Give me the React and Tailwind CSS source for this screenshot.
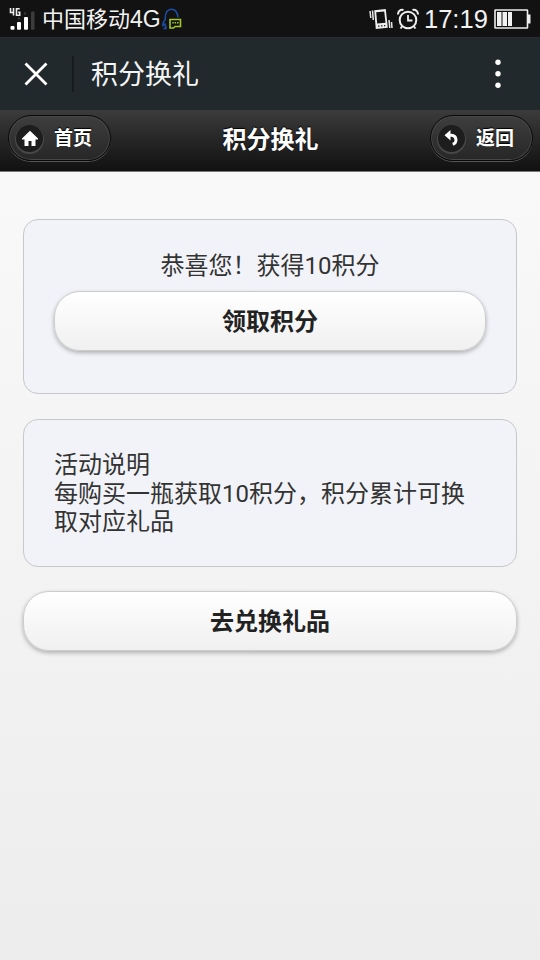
const StatusBar = () => (
  <div className="flex h-[37px] items-center bg-[#121212] text-[#f2f2f2] font-['Liberation_Sans','Noto_Sans_CJK_SC',sans-serif]">
    <svg width="28" height="24" viewBox="0 0 28 24" className="ml-2" fill="none">
      <path d="M2.500 1v4.500h3.500M5.500 1v7.500M11.700 1.800H8.500v6.400h3.200V5.200h-1.500" stroke="#eee" strokeWidth="1.600" />
      <path d="M10 11.500h2M16 6.500h2" stroke="#383838" strokeWidth="2" />
      <rect x="2.500" y="19" width="4" height="3.800" rx="1" fill="#fff" />
      <rect x="9" y="15" width="4" height="7.800" rx="1" fill="#fff" />
      <rect x="16" y="10" width="4" height="12.800" rx="1" fill="#fff" />
      <rect x="23" y="4.500" width="3.500" height="18.300" rx="1" fill="#3c3c3c" />
    </svg>
    <span className="ml-1.5 pt-px text-[22px] leading-[36px]">
      中国移动<span className="text-[23px]">4G</span>
    </span>
    <svg width="20" height="22" viewBox="0 0 20 22" className="ml-px" fill="none">
      <path d="M4.500 20.500H2.500l1.500-1.500-1.200-3L1 17.500c-.4-2.200.8-4.500 2.300-6C2.800 5 5.500 1.200 9.500 1.200c3.800 0 6 3.300 6.500 8.300" stroke="#1c4fa8" strokeWidth="1.500" />
      <path d="M8 11.500h10.500v7H13l-1.500 1.500H8z" stroke="#a4c72c" strokeWidth="1.600" />
      <path d="M10.300 14.800h1.500M12.600 14.800h1.500M15 14.800h1.500" stroke="#a4c72c" strokeWidth="1.500" />
    </svg>
    <div className="ml-auto mr-[9px] flex items-center">
      <svg width="24" height="22" viewBox="0 0 24 22" fill="none">
        <path d="M1 3l.8 7M3.500 2.500l.8 9.500M20 12l.8 8M22.500 14l.5 6" stroke="#e8e8e8" strokeWidth="1.500" />
        <path d="M5.200 2.300 16.800 1l2 18.800-12 1.200z" fill="#eee" />
        <path d="M7.200 4.200 15.200 3.400l1.300 11.400-8.300.6z" fill="#121212" />
        <path d="M9 18.200h1.500M12 17.900h1.500M15 17.600h1.300" stroke="#222" strokeWidth="1.300" />
      </svg>
      <svg width="22" height="22" viewBox="0 0 22 22" className="ml-1" fill="none" stroke="#eee">
        <circle cx="11" cy="12" r="8.300" strokeWidth="2" />
        <path d="M11 7v5.500h4.500" strokeWidth="1.800" />
        <path d="M1.200 6.500A4 4 0 0 1 6.500 2M15.500 2a4 4 0 0 1 5.300 4.500M5.500 18l-2 2.500M16.500 18l2 2.500" strokeWidth="2" />
      </svg>
      <span className="ml-[5px] w-[67px] pt-px text-[25.5px] leading-[36px]">17:19</span>
      <svg width="37" height="20" viewBox="0 0 37 20" className="ml-[3px]" fill="none">
        <rect x="1" y="1" width="32.500" height="18" rx="0.5" stroke="#eee" strokeWidth="1.600" />
        <path d="M3 3h4.500v14H3zM8.500 3H13v14H8.500zM14 3h4v14h-4z" fill="#f2f2f2" />
        <path d="M34 5.500h2.500v9H34z" fill="#eee" />
      </svg>
    </div>
  </div>
);

const TitleBar = () => (
  <div className="flex h-[73px] items-center border-t border-[#2a2c31] bg-[#22292c] text-[#f4f6f6]">
    <svg width="24" height="24" viewBox="0 0 24 24" className="ml-6" fill="none" stroke="#fff" strokeWidth="2.800">
      <path d="M1.500 1.500l21 21M22.500 1.500l-21 21" />
    </svg>
    <div className="ml-6 h-9 w-0.5 bg-[#161b1d]" />
    <h1 className="ml-[17px] pt-0.5 text-[27px] leading-none">积分换礼</h1>
    <svg width="6" height="30" viewBox="0 0 6 30" className="ml-auto mr-[39px]" fill="#fff">
      <circle cx="3" cy="3.200" r="2.700" />
      <circle cx="3" cy="14.800" r="2.700" />
      <circle cx="3" cy="26.200" r="2.700" />
    </svg>
  </div>
);

const NavButton = ({ label, children }) => (
  <button className="flex h-[46px] w-[103px] items-center rounded-full border border-[#080808] bg-linear-to-b from-[#3e3e3e] to-[#272727] pl-[7px] text-white shadow-[inset_0_0_0_1px_#484848,0_1px_0_#555]">
    <span className="flex size-[27px] items-center justify-center rounded-full bg-[#1d1d1d] shadow-[0_1px_0_1px_#484848]">
      {children}
    </span>
    <span className="ml-[11px] text-[19px] font-bold leading-none [text-shadow:0_-1px_1px_#000]">{label}</span>
  </button>
);

const Header = () => (
  <header className="flex h-[62px] items-center justify-between border-b border-[#777] bg-linear-to-b from-[#3c3c3c] to-[#111] pr-[7px] pl-2 pb-[5px]">
    <NavButton label="首页">
      <svg width="18" height="17" viewBox="0 0 18 17" fill="#fff">
        <path d="M9 .8 17 8.500v1h-2.500V16h-4v-5h-3v5h-4V9.500H1v-1z" />
      </svg>
    </NavButton>
    <h2 className="pt-[3px] text-2xl font-bold leading-none text-white [text-shadow:0_-1px_1px_#000]">积分换礼</h2>
    <NavButton label="返回">
      <svg width="17" height="18" viewBox="0 0 17 18" fill="none">
        <path d="M5 6.200h3.500a4.600 4.600 0 0 1 1.200 9" stroke="#fff" strokeWidth="3" />
        <path d="M1.500 6.200 7.500 1v10.500z" fill="#fff" />
      </svg>
    </NavButton>
  </header>
);

const Panel = ({ className, children }) => (
  <section className={`rounded-[15px] border-[1.5px] border-[#c8c8ca] bg-[#f2f3f8] px-[30px] text-2xl text-[#333] ${className}`}>
    {children}
  </section>
);

const Button = ({ children }) => (
  <button className="block h-[60px] w-full rounded-[26px] border-[1.5px] border-[#ccc] bg-linear-to-b from-white to-[#f0f0f0] pt-0.5 text-2xl font-bold text-[#222] shadow-[0_2px_4px_rgba(0,0,0,0.28)]">
    {children}
  </button>
);

export default function App() {
  return (
    <div className="flex h-[960px] w-[540px] flex-col overflow-hidden font-[Roboto,'Noto_Sans_CJK_SC',sans-serif]">
      <StatusBar />
      <TitleBar />
      <Header />
      <main className="flex-1 bg-linear-to-b from-[#f9f9f9] to-[#ededed] px-[23px] pt-[47px]">
        <Panel className="h-[175px] pt-8">
          <p className="mb-2.5 text-center leading-[29px]">恭喜您！获得10积分</p>
          <Button>领取积分</Button>
        </Panel>
        <Panel className="mt-[25px] mb-6 h-[148px] pt-[31px] leading-[28.5px]">
          <p>活动说明</p>
          <p>每购买一瓶获取10积分，积分累计可换取对应礼品</p>
        </Panel>
        <Button>去兑换礼品</Button>
      </main>
    </div>
  );
}
